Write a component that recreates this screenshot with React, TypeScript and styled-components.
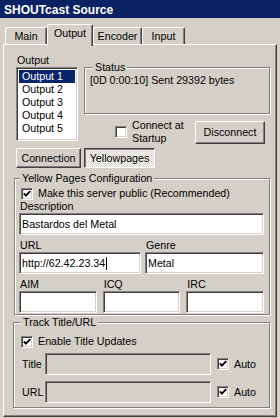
import React from "react";
import styled, { createGlobalStyle } from "styled-components";

const GlobalStyle = createGlobalStyle`
  * { box-sizing: border-box; }
  html, body { margin: 0; padding: 0; background: #d4d0c8; }
  body {
    font-family: "Liberation Sans", Arial, sans-serif;
    font-size: 10.7px;
    color: #000;
  }
`;

const tabs = [
  { name: "Main", width: 42 },
  { name: "Output", width: 46, active: true },
  { name: "Encoder", width: 49 },
  { name: "Input", width: 43 },
];

const outputs = ["Output 1", "Output 2", "Output 3", "Output 4", "Output 5"];

function CheckBox({ checked }: { checked?: boolean }) {
  return (
    <Box>
      {checked && (
        <svg width="8" height="8" viewBox="0 0 8 8">
          <polyline
            points="0.8,3.4 2.9,5.6 7.2,1.2"
            fill="none"
            stroke="#000"
            strokeWidth="1.9"
          />
        </svg>
      )}
    </Box>
  );
}

export default function App() {
  return (
    <>
      <GlobalStyle />
      <Window>
        <TitleBar>SHOUTcast Source</TitleBar>
        <TabStrip>
          {tabs.map((t) => (
            <Tab key={t.name} $active={!!t.active} $width={t.width}>
              {t.name}
            </Tab>
          ))}
        </TabStrip>
        <Panel>
          <TopSection>
            <div>
              <Label $pad={1}>Output</Label>
              <ListBox>
                {outputs.map((o, i) => (
                  <ListItem key={o} $selected={i === 0}>
                    {o}
                  </ListItem>
                ))}
              </ListBox>
            </div>
            <div>
              <StatusGroup>
                <Legend $indent={8}>Status</Legend>
                <StatusBody>[0D 0:00:10] Sent 29392 bytes</StatusBody>
              </StatusGroup>
              <ConnectRow>
                <CheckLabel $indent={31}>
                  <CheckBox />
                  <span>
                    Connect at
                    <br />
                    Startup
                  </span>
                </CheckLabel>
                <Button $width={70} $height={23} $right={5}>
                  Disconnect
                </Button>
              </ConnectRow>
            </div>
          </TopSection>

          <ButtonRow>
            <Button $width={65} $height={20}>
              Connection
            </Button>
            <Button $width={71} $height={20} $pressed>
              Yellowpages
            </Button>
          </ButtonRow>

          <YellowGroup>
            <Legend $indent={5}>Yellow Pages Configuration</Legend>
            <YellowBody>
              <CheckLabel $indent={2}>
                <CheckBox checked />
                <span>Make this server public (Recommended)</span>
              </CheckLabel>
              <Label $pad={1}>Description</Label>
              <Field>Bastardos del Metal</Field>
              <TwoCols>
                <div>
                  <Label $pad={1}>URL</Label>
                  <Field>
                    http://62.42.23.34
                    <Caret />
                  </Field>
                </div>
                <div>
                  <Label $pad={1}>Genre</Label>
                  <Field>Metal</Field>
                </div>
              </TwoCols>
              <ThreeCols>
                <div>
                  <Label $pad={1}>AIM</Label>
                  <Field />
                </div>
                <div>
                  <Label $pad={1}>ICQ</Label>
                  <Field />
                </div>
                <div>
                  <Label $pad={1}>IRC</Label>
                  <Field />
                </div>
              </ThreeCols>
            </YellowBody>
          </YellowGroup>

          <TrackGroup>
            <Legend $indent={7}>Track Title/URL</Legend>
            <TrackBody>
              <CheckLabel $indent={0}>
                <CheckBox checked />
                <span>Enable Title Updates</span>
              </CheckLabel>
              <TrackRow>
                <RowLabel>Title</RowLabel>
                <Field $disabled $width={166} />
                <AutoCheck>
                  <CheckBox checked />
                  <span>Auto</span>
                </AutoCheck>
              </TrackRow>
              <TrackRow>
                <RowLabel>URL</RowLabel>
                <Field $disabled $width={166} />
                <AutoCheck>
                  <CheckBox checked />
                  <span>Auto</span>
                </AutoCheck>
              </TrackRow>
            </TrackBody>
          </TrackGroup>
        </Panel>
      </Window>
    </>
  );
}

const Window = styled.div`
  width: 280px;
  height: 418px;
  display: flex;
  flex-direction: column;
  background: #d4d0c8;
  overflow: hidden;
`;

const TitleBar = styled.div`
  flex-shrink: 0;
  height: 18px;
  padding: 3px 0 0 4px;
  background: #0a2264;
  color: #fff;
  font-size: 12px;
  font-weight: bold;
  line-height: 15px;
`;

const TabStrip = styled.div`
  flex-shrink: 0;
  display: flex;
  align-items: flex-end;
  height: 26px;
  padding-left: 5px;
`;

const Tab = styled.div<{ $active: boolean; $width: number }>`
  width: ${(p) => p.$width}px;
  height: ${(p) => (p.$active ? 22 : 17)}px;
  margin-bottom: ${(p) => (p.$active ? -2 : 0)}px;
  position: relative;
  z-index: ${(p) => (p.$active ? 1 : 0)};
  border: 1px solid;
  border-bottom: none;
  border-color: #fff #404040 transparent #fff;
  border-radius: 2px 2px 0 0;
  box-shadow: inset -1px 0 0 #808080;
  background: #d4d0c8;
  text-align: center;
  line-height: ${(p) => (p.$active ? 17 : 16)}px;
`;

const Panel = styled.div`
  flex: 1;
  margin: 0 3px 1px;
  padding: 9px 6px 0 10px;
  border: 1px solid;
  border-color: #fff #404040 #404040 #fff;
  box-shadow: inset -1px -1px 0 #808080;
`;

const TopSection = styled.div`
  display: grid;
  grid-template-columns: 62px 1fr;
  column-gap: 6px;
  margin-left: 2px;
`;

const Label = styled.div<{ $pad?: number }>`
  line-height: 13px;
  padding-left: ${(p) => p.$pad ?? 0}px;
  white-space: nowrap;
`;

const sunken = `
  border: 1px solid;
  border-color: #808080 #fff #fff #808080;
  box-shadow: inset 1px 1px 0 #404040, inset -1px -1px 0 #d4d0c8;
`;

const ListBox = styled.div`
  height: 74px;
  padding: 2px;
  background: #fff;
  ${sunken}
`;

const ListItem = styled.div<{ $selected?: boolean }>`
  height: 13px;
  line-height: 13px;
  padding-left: 3px;
  background: ${(p) => (p.$selected ? "#0a246a" : "transparent")};
  color: ${(p) => (p.$selected ? "#fff" : "#000")};
`;

const Group = styled.fieldset`
  margin: 0;
  padding: 0;
  min-width: 0;
  border: 1px solid #808080;
  box-shadow: 1px 1px 0 #fff, inset 1px 1px 0 #fff;
`;

const Legend = styled.legend<{ $indent: number }>`
  margin-left: ${(p) => p.$indent}px;
  padding: 0 2px;
  line-height: 13px;
  background: #d4d0c8;
`;

const StatusGroup = styled(Group)`
  margin-top: 7px;
`;

const StatusBody = styled.div`
  height: 39px;
  padding-left: 5px;
  line-height: 13px;
  white-space: nowrap;
`;

const ConnectRow = styled.div`
  display: flex;
  align-items: center;
  height: 26px;
  margin-top: 5px;
`;

const CheckLabel = styled.div<{ $indent: number }>`
  display: flex;
  align-items: center;
  gap: 5px;
  margin-left: ${(p) => p.$indent}px;
  line-height: 13px;
  white-space: nowrap;
`;

const Box = styled.span`
  flex-shrink: 0;
  display: flex;
  align-items: center;
  justify-content: center;
  width: 12px;
  height: 12px;
  background: #fff;
  ${sunken}
`;

const Button = styled.div<{
  $width: number;
  $height: number;
  $right?: number;
  $pressed?: boolean;
}>`
  width: ${(p) => p.$width}px;
  height: ${(p) => p.$height}px;
  margin-left: ${(p) => (p.$right !== undefined ? "auto" : "0")};
  margin-right: ${(p) => p.$right ?? 0}px;
  display: flex;
  align-items: center;
  justify-content: center;
  border: 1px solid;
  border-color: ${(p) =>
    p.$pressed ? "#404040 #fff #fff #404040" : "#fff #404040 #404040 #fff"};
  box-shadow: ${(p) =>
    p.$pressed ? "inset 1px 1px 0 #808080" : "inset -1px -1px 0 #808080"};
  background: ${(p) =>
    p.$pressed
      ? "repeating-conic-gradient(#fff 0 25%, #d4d0c8 0 50%) 0 0 / 2px 2px"
      : "#d4d0c8"};
  white-space: nowrap;
`;

const ButtonRow = styled.div`
  display: flex;
  gap: 3px;
  margin: 3px 0 0 2px;
`;

const YellowGroup = styled(Group)`
  margin-top: 4px;
`;

const YellowBody = styled.div`
  padding: 2px 5px 1px 4px;
`;

const Field = styled.div<{ $disabled?: boolean; $width?: number }>`
  height: 22px;
  width: ${(p) => (p.$width ? `${p.$width}px` : "100%")};
  flex-shrink: 0;
  padding-left: 2px;
  line-height: 20px;
  background: ${(p) => (p.$disabled ? "#d4d0c8" : "#fff")};
  white-space: nowrap;
  overflow: hidden;
  ${sunken}
`;

const Caret = styled.span`
  display: inline-block;
  width: 1px;
  height: 13px;
  margin-left: 1px;
  vertical-align: -3px;
  background: #000;
`;

const TwoCols = styled.div`
  display: grid;
  grid-template-columns: 122px 1fr;
  column-gap: 4px;
  margin-top: 4px;
`;

const ThreeCols = styled.div`
  display: grid;
  grid-template-columns: 1fr 1fr 1fr;
  column-gap: 6px;
  margin-top: 4px;
`;

const TrackGroup = styled(Group)`
  margin: 1px 0 0 -1px;
`;

const TrackBody = styled.div`
  padding: 6px 0 4px 7px;
`;

const TrackRow = styled.div`
  display: flex;
  align-items: center;
  margin-top: 5px;

  & + & {
    margin-top: 6px;
  }
`;

const RowLabel = styled.div`
  width: 24px;
  padding-left: 1px;
  line-height: 13px;
`;

const AutoCheck = styled.div`
  display: flex;
  align-items: center;
  gap: 5px;
  margin-left: 6px;
`;
